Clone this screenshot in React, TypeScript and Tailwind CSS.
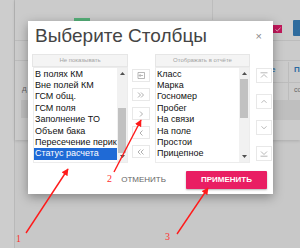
import React from "react";

const leftItems = [
  "В полях КМ",
  "Вне полей КМ",
  "ГСМ общ.",
  "ГСМ поля",
  "Заполнение ТО",
  "Объем бака",
  "Пересечение перик",
  "Статус расчета",
];

const rightItems = [
  "Класс",
  "Марка",
  "Госномер",
  "Пробег",
  "На связи",
  "На поле",
  "Простои",
  "Прицепное",
];

function Tri({ up }: { up: boolean }) {
  return (
    <svg width="5" height="3" viewBox="0 0 5 3">
      <polygon points={up ? "0,3 5,3 2.5,0" : "0,0 5,0 2.5,3"} fill="#505050" />
    </svg>
  );
}

function ListBox({
  items,
  selected,
  thumbTop,
  thumbH,
}: {
  items: string[];
  selected: number;
  thumbTop: number;
  thumbH: number;
}) {
  return (
    <div className="flex h-[96px] border border-[#ececec] bg-white">
      <div className="min-w-0 flex-1 overflow-hidden pt-[0.5px]">
        {items.map((it, i) => (
          <div
            key={i}
            className={
              i === selected
                ? "h-[11.43px] whitespace-nowrap bg-[#1f6ad6] pl-[1px] text-[9px] leading-[11.43px] text-white"
                : "h-[11.43px] whitespace-nowrap pl-[1px] text-[9px] leading-[11.43px] text-[#111]"
            }
          >
            {it}
          </div>
        ))}
      </div>
      <div className="relative flex w-[10px] flex-col items-center justify-between bg-[#f1f1f1] py-[4px]">
        <Tri up />
        <div
          className="absolute left-[1px] right-[1px] bg-[#c1c1c1]"
          style={{ top: thumbTop, height: thumbH }}
        />
        <Tri up={false} />
      </div>
    </div>
  );
}

function SmallBtn({ children, h }: { children: React.ReactNode; h: string }) {
  return (
    <div
      className={
        h === "m"
          ? "flex h-[13px] w-[18px] items-center justify-center border border-[#e8e8e8] bg-white"
          : "flex h-[15px] w-[16px] items-center justify-center border border-[#e8e8e8] bg-white"
      }
    >
      {children}
    </div>
  );
}

const stroke = "#9a9a9a";

function Chev({ dir, double }: { dir: "l" | "r"; double?: boolean }) {
  const one = dir === "r" ? "M1 0.5 L3.5 3 L1 5.5" : "M3.5 0.5 L1 3 L3.5 5.5";
  const two = dir === "r" ? "M4 0.5 L6.5 3 L4 5.5" : "M6.5 0.5 L4 3 L6.5 5.5";
  return (
    <svg width={double ? 8 : 5} height="6" viewBox={double ? "0 0 8 6" : "0 0 5 6"}>
      <path d={one} fill="none" stroke={stroke} strokeWidth="0.8" />
      {double && <path d={two} fill="none" stroke={stroke} strokeWidth="0.8" />}
    </svg>
  );
}

function MoveFirstIcon() {
  return (
    <svg width="8" height="7" viewBox="0 0 8 7">
      <path d="M1 0.5 V6.5 M1 0.5 H7.5 V6.5 H1" fill="none" stroke={stroke} strokeWidth="0.7" />
      <path d="M6 3.5 H2.2 M3.6 2 L2.1 3.5 L3.6 5" fill="none" stroke={stroke} strokeWidth="0.7" />
    </svg>
  );
}

function VIcon({ kind }: { kind: "top" | "up" | "down" | "bottom" }) {
  return (
    <svg width="8" height="7" viewBox="0 0 8 7">
      {kind === "top" && (
        <>
          <path d="M0.5 0.8 H7.5" stroke={stroke} strokeWidth="0.7" />
          <path d="M1 5.5 L4 2.5 L7 5.5" fill="none" stroke={stroke} strokeWidth="0.7" />
        </>
      )}
      {kind === "up" && <path d="M1.5 4.8 L4 2.3 L6.5 4.8" fill="none" stroke={stroke} strokeWidth="0.7" />}
      {kind === "down" && <path d="M1.5 2.3 L4 4.8 L6.5 2.3" fill="none" stroke={stroke} strokeWidth="0.7" />}
      {kind === "bottom" && (
        <>
          <path d="M1 1.5 L4 4.5 L7 1.5" fill="none" stroke={stroke} strokeWidth="0.7" />
          <path d="M0.5 6.2 H7.5" stroke={stroke} strokeWidth="0.7" />
        </>
      )}
    </svg>
  );
}

function Background() {
  return (
    <div className="absolute inset-0">
      <div className="absolute left-0 top-0 h-full w-[15px] border-r border-[#b9b9b9] bg-[#cdcdcd]" />
      <div className="absolute left-[15px] right-0 top-0 h-[140px] bg-[#cbcbcb] shadow-[0_1px_3px_rgba(0,0,0,0.15)]">
        <div className="absolute left-0 right-0 top-[40px] border-t border-[#bcbcbc]" />
        <div className="absolute left-0 right-0 top-[60px] border-t border-[#bcbcbc]" />
        <div className="absolute left-[6px] top-[100px] h-[18px] w-[20px] bg-[#bebebe]" />
        <div className="absolute left-[197px] top-0 h-[20px] border-l border-[#bdbdbd]" />
        <div className="absolute left-[258px] right-0 top-[100px] h-[20px] bg-[#bfbfbf]" />
        <div className="absolute left-[258px] right-0 top-[82px] border-t border-[#bcbcbc]" />
        <div className="absolute left-[273px] top-[62px] h-[38px] border-l border-[#bcbcbc]" />
      </div>
      <span className="absolute left-[22px] top-[84px] text-[8px] leading-[10px] text-[#666]">д</span>
      <div className="absolute left-[74px] top-[18px] h-[4px] w-[16px] bg-[#56b07a]" />
      <div className="absolute left-[273px] top-[25px] flex h-[8px] w-[9px] items-center justify-center bg-[#c2185b]">
        <svg width="6" height="5" viewBox="0 0 6 5">
          <path d="M0.5 2.5 L2.2 4 L5.5 0.8" fill="none" stroke="#f3d0dc" strokeWidth="0.8" />
        </svg>
      </div>
      <div className="absolute left-[293px] top-[20px] h-[16px] w-[10px] rounded-[1px] bg-[#2f6c9e]" />
      <span className="absolute left-[271px] top-[65px] text-[8px] font-bold leading-[10px] text-[#2a6aa0]">е</span>
      <span className="absolute left-[294px] top-[65px] text-[8px] font-bold leading-[10px] text-[#2a6aa0]">П</span>
      <span className="absolute left-[294px] top-[85px] text-[7px] leading-[10px] text-[#666]">co</span>
    </div>
  );
}

function Modal() {
  return (
    <div className="absolute left-[28px] top-[21px] flex h-[173px] w-[245px] flex-col bg-white pt-[4px] shadow-[0_3px_10px_rgba(0,0,0,0.35)]">
      <div className="flex items-start justify-between pl-[7px] pr-[11px]">
        <div className="text-[19px] leading-[22px] text-[#444]">Выберите Столбцы</div>
        <div className="mt-[5px] text-[11px] leading-[12px] text-[#8a8a8a]">×</div>
      </div>
      <div className="mt-[7px] flex items-start pl-[4px]">
        <div className="w-[96px]">
          <div className="flex h-[13px] items-center justify-center border border-[#e6e6e6] bg-[#f4f4f4] text-[6px] text-[#a3a3a3]">
            Не показывать
          </div>
          <div className="ml-[1px]">
            <ListBox items={leftItems} selected={7} thumbTop={40} thumbH={45} />
          </div>
        </div>
        <div className="ml-[4px] mt-[15px] flex flex-col gap-[6px]">
          <SmallBtn h="m">
            <MoveFirstIcon />
          </SmallBtn>
          <SmallBtn h="m">
            <Chev dir="r" double />
          </SmallBtn>
          <SmallBtn h="m">
            <Chev dir="r" />
          </SmallBtn>
          <SmallBtn h="m">
            <Chev dir="l" />
          </SmallBtn>
          <SmallBtn h="m">
            <Chev dir="l" double />
          </SmallBtn>
        </div>
        <div className="ml-[5px] w-[95px]">
          <div className="flex h-[13px] items-center justify-center border border-[#e6e6e6] bg-[#f4f4f4] text-[6px] text-[#a3a3a3]">
            Отображать в отчёте
          </div>
          <ListBox items={rightItems} selected={-1} thumbTop={11} thumbH={39} />
        </div>
        <div className="ml-[6px] mt-[14px] flex flex-col gap-[11px]">
          <SmallBtn h="r">
            <VIcon kind="top" />
          </SmallBtn>
          <SmallBtn h="r">
            <VIcon kind="up" />
          </SmallBtn>
          <SmallBtn h="r">
            <VIcon kind="down" />
          </SmallBtn>
          <SmallBtn h="r">
            <VIcon kind="bottom" />
          </SmallBtn>
        </div>
      </div>
      <div className="mt-[8px] flex items-center justify-end gap-[20px] pr-[6px]">
        <div className="text-[8px] leading-[10px] text-[#666]">ОТМЕНИТЬ</div>
        <div className="flex h-[18px] w-[81px] items-center justify-center rounded-[1px] bg-[#e91e63] text-[8px] font-bold text-white shadow-[0_1px_2px_rgba(0,0,0,0.3)]">
          ПРИМЕНИТЬ
        </div>
      </div>
    </div>
  );
}

function Annotations() {
  return (
    <>
      <svg className="pointer-events-none absolute inset-0" width="300" height="248" viewBox="0 0 300 248">
        <defs>
          <marker id="ah" viewBox="0 0 10 10" refX="9" refY="5" markerWidth="5" markerHeight="5" orient="auto">
            <path d="M0 0 L10 5 L0 10 z" fill="#ff1a1a" />
          </marker>
        </defs>
        <line x1="26" y1="233" x2="68" y2="169" stroke="#ff1a1a" strokeWidth="1.4" markerEnd="url(#ah)" />
        <line x1="114" y1="172" x2="141" y2="120" stroke="#ff1a1a" strokeWidth="1.4" markerEnd="url(#ah)" />
        <line x1="177" y1="234" x2="208" y2="188" stroke="#ff1a1a" strokeWidth="1.4" markerEnd="url(#ah)" />
      </svg>
      <span className="absolute left-[16px] top-[234px] text-[10px] leading-[10px] text-[#ff3030] [font-family:'Liberation_Serif',serif]">
        1
      </span>
      <span className="absolute left-[107px] top-[174px] text-[10px] leading-[10px] text-[#ff3030] [font-family:'Liberation_Serif',serif]">
        2
      </span>
      <span className="absolute left-[165px] top-[232px] text-[10px] leading-[10px] text-[#ff3030] [font-family:'Liberation_Serif',serif]">
        3
      </span>
    </>
  );
}

export default function App() {
  return (
    <div className="relative h-[248px] w-[300px] overflow-hidden bg-[#c8c8c8] [font-family:'Liberation_Sans',Arial,sans-serif]">
      <Background />
      <Modal />
      <Annotations />
    </div>
  );
}
